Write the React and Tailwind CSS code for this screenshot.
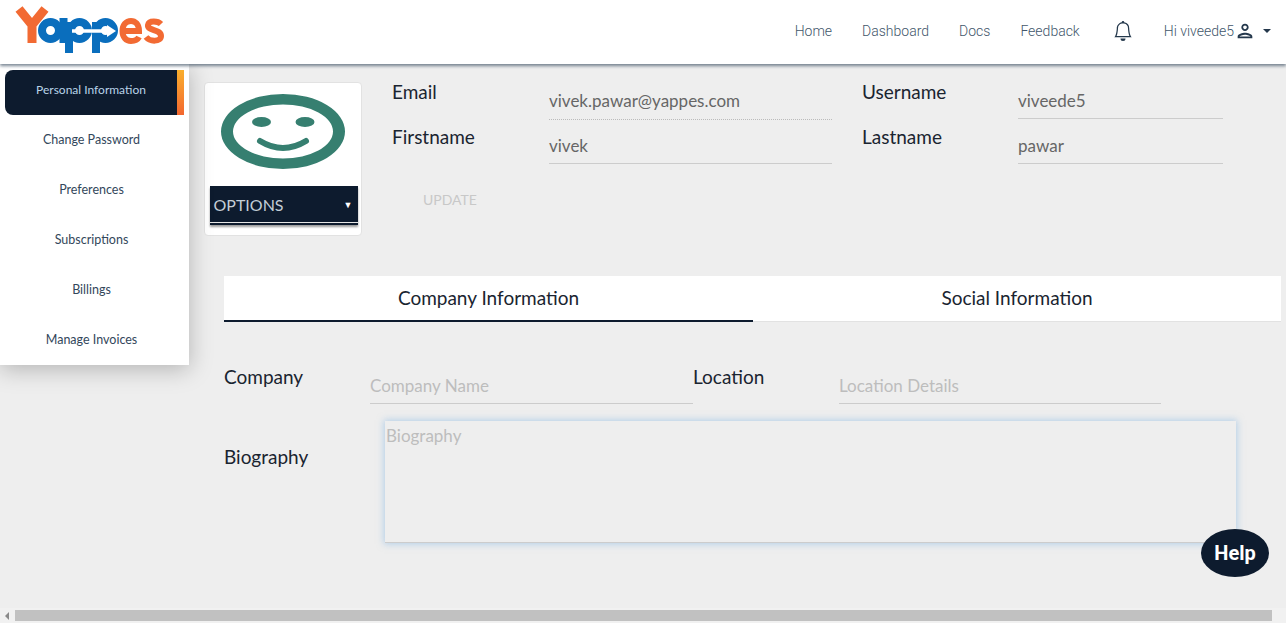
import React from "react";
import { BsBell } from "react-icons/bs";
import { MdOutlinePerson } from "react-icons/md";

function Logo() {
  return (
    <svg width="180" height="64" viewBox="0 0 180 64" fill="none" aria-label="Yappes">
      <path d="M19 9 L32 25 L32 43 M45 9 L32 25" stroke="#f26a33" strokeWidth="9" />
      <g stroke="#0a6ebd" strokeWidth="8">
        <circle cx="50.500" cy="30.500" r="8.500" />
        <path d="M63.500 18 V43" />
        <circle cx="79.500" cy="30.500" r="8.500" />
        <path d="M69 22 V53" />
        <circle cx="105.500" cy="30.500" r="8.500" />
        <path d="M96 22 V53" />
      </g>
      <path d="M72 31 H108" stroke="#fff" strokeWidth="3.5" />
      <path d="M107 25 L116 31 L107 37 Z" fill="#fff" />
      <g stroke="#f26a33" strokeWidth="6">
        <path d="M123 31 H139 C139 24 135 21 131 21 C126 21 122.500 25 122.500 31 C122.500 37 126 41 131 41 C135 41 138 39 139 37" />
        <path d="M161 24 C158 21 149 20 148 25 C147 31 161 29 161 36 C161 42 150 42 146 37" />
      </g>
    </svg>
  );
}

function Smiley() {
  return (
    <svg className="mr-px" width="126" height="78" viewBox="0 0 126 78" fill="none">
      <path
        fillRule="evenodd"
        fill="#367f70"
        d="M1 38.500 A62 37.500 0 1 0 125 38.500 A62 37.500 0 1 0 1 38.500 Z M13 38.500 A50 27 0 1 1 113 38.500 A50 27 0 1 1 13 38.500 Z"
      />
      <ellipse cx="41.500" cy="29" rx="9.500" ry="5" fill="#367f70" />
      <ellipse cx="85" cy="29" rx="9.500" ry="5" fill="#367f70" />
      <path d="M40 48 Q63 62 86 48" stroke="#367f70" strokeWidth="6" strokeLinecap="round" />
    </svg>
  );
}

const menu = ["Change Password", "Preferences", "Subscriptions", "Billings", "Manage Invoices"];

function NavBar() {
  return (
    <header className="relative z-20 flex h-16 shrink-0 items-center justify-between bg-white pr-[15px] shadow-[0_2px_3px_rgba(50,70,90,0.65)]">
      <Logo />
      <nav className="flex items-center pb-[3px] font-[Roboto,sans-serif] text-sm font-light text-[#42566a]">
        <a className="mr-[30px]">Home</a>
        <a className="mr-[30px]">Dashboard</a>
        <a className="mr-[30px]">Docs</a>
        <a className="mr-[33px]">Feedback</a>
        <BsBell className="mr-[31px] text-[#24384c]" size={20} />
        <span>Hi viveede5</span>
        <MdOutlinePerson className="text-[#24384c]" size={22} />
        <span className="ml-[7px] mt-[1px] h-0 w-0 border-x-4 border-t-4 border-x-transparent border-t-[#24384c]" />
      </nav>
    </header>
  );
}

function Sidebar() {
  return (
    <aside className="relative z-10 flex h-[301px] w-[189px] shrink-0 flex-col bg-white px-[5px] pt-[6px] text-[12.500px] text-[#33475b] shadow-[0_4px_22px_rgba(0,0,0,0.25)]">
      <div className="flex h-[45px] shrink-0 overflow-hidden rounded-l-lg bg-[#0d1b2e] text-[12px] text-[#b9d3e8]">
        <span className="flex flex-1 items-center justify-center pb-[5px]">Personal Information</span>
        <span className="w-[7px] bg-gradient-to-b from-[#f9ae2c] to-[#f2662f]" />
      </div>
      {menu.map((m) => (
        <div key={m} className="flex h-[50px] shrink-0 items-center justify-center pr-[6px] pt-[1px]">{m}</div>
      ))}
    </aside>
  );
}

function ValueField({ value, width, variant }) {
  const styles = {
    dotted: "h-[38px] border-dotted border-[#bbb]",
    solid: "h-[37px] border-solid border-[#ccc] pt-[2px]",
  };
  return (
    <div className={`${width} ${styles[variant]} flex items-center border-b text-[17px] text-[#666]`}>
      {value}
    </div>
  );
}

function ProfileTop() {
  return (
    <section className="flex pl-[15px] pt-[18px]">
      <div className="flex h-[154px] w-[158px] shrink-0 flex-col items-center rounded border border-[#e2e2e2] bg-white pt-[10px]">
        <Smiley />
        <div className="ml-px mt-[15px] flex h-[39px] w-[148px] items-center justify-between border-b-2 border-[#0d1b2e] bg-[#0d1b2e] px-1 text-base text-[#c3cdd6] shadow-[0_2px_2px_rgba(0,0,0,0.4),inset_0_-1px_0_#e6e6e6]">
          OPTIONS
          <span className="pr-[1px] text-[9px] text-white">▼</span>
        </div>
      </div>
      <div className="ml-[30px] flex flex-col text-[19px] text-[#1a2430]">
        <div className="flex h-[45px]">
          <span className="w-[157px] leading-[20px]">Email</span>
          <ValueField value="vivek.pawar@yappes.com" variant="dotted" width="w-[283px]" />
          <span className="ml-[30px] w-[156px] leading-[20px]">Username</span>
          <ValueField value="viveede5" variant="solid" width="w-[205px]" />
        </div>
        <div className="flex h-[45px]">
          <span className="w-[157px] leading-[20px]">Firstname</span>
          <ValueField value="vivek" variant="solid" width="w-[283px]" />
          <span className="ml-[30px] w-[156px] leading-[20px]">Lastname</span>
          <ValueField value="pawar" variant="solid" width="w-[205px]" />
        </div>
        <button className="ml-[31px] mt-[18px] w-fit text-left text-sm text-[#c8c8c8]">UPDATE</button>
      </div>
    </section>
  );
}

function Tabs() {
  return (
    <div className="ml-[35px] mt-[40px] flex h-[46px] w-[1057px] bg-white text-[19px] text-[#1a2430]">
      <div className="flex w-[529px] items-center justify-center border-b-2 border-[#0d1b2e]">Company Information</div>
      <div className="flex flex-1 items-center justify-center border-b border-[#e2e2e2]">Social Information</div>
    </div>
  );
}

function CompanyForm() {
  const input = "h-[37px] border-b border-[#ccc] bg-transparent text-[17px] outline-none placeholder:text-[#bdbdbd]";
  return (
    <div className="ml-[35px] text-[19px] text-[#1a2430]">
      <div className="mt-[45px] flex">
        <span className="w-[146px] leading-[20px]">Company</span>
        <input readOnly placeholder="Company Name" className={`${input} w-[323px]`} />
        <span className="w-[146px] leading-[20px]">Location</span>
        <input readOnly placeholder="Location Details" className={`${input} w-[322px]`} />
      </div>
      <div className="mt-[17px] flex">
        <span className="w-[161px] pt-[25px] leading-[22px]">Biography</span>
        <textarea
          readOnly
          placeholder="Biography"
          className="h-[122px] w-[851px] resize-none border-b border-[#ccc] bg-transparent pl-px pt-[2px] text-[17px] shadow-[0_0_7px_1px_rgba(130,180,225,0.55)] outline-none placeholder:text-[#bdbdbd]"
        />
      </div>
    </div>
  );
}

function ScrollBar() {
  return (
    <div className="flex h-[15px] shrink-0 items-center bg-[#f1f1f1]">
      <span className="ml-[5px] h-0 w-0 border-y-4 border-r-4 border-y-transparent border-r-[#8a8a8a]" />
      <span className="ml-[6px] h-[11px] w-[1257px] bg-[#c1c1c1]" />
    </div>
  );
}

export default function App() {
  return (
    <div className="relative flex h-[623px] w-[1286px] flex-col overflow-hidden bg-[#eeeeee] font-[Lato,sans-serif]">
      <NavBar />
      <div className="flex min-h-0 flex-1">
        <Sidebar />
        <main className="min-w-0 flex-1">
          <ProfileTop />
          <Tabs />
          <CompanyForm />
        </main>
      </div>
      <ScrollBar />
      <button className="absolute left-[1201px] top-[529px] z-30 h-12 w-[68px] rounded-[50%] bg-[#0d1b2e] font-[Roboto,sans-serif] text-xl font-bold text-white">Help</button>
    </div>
  );
}
